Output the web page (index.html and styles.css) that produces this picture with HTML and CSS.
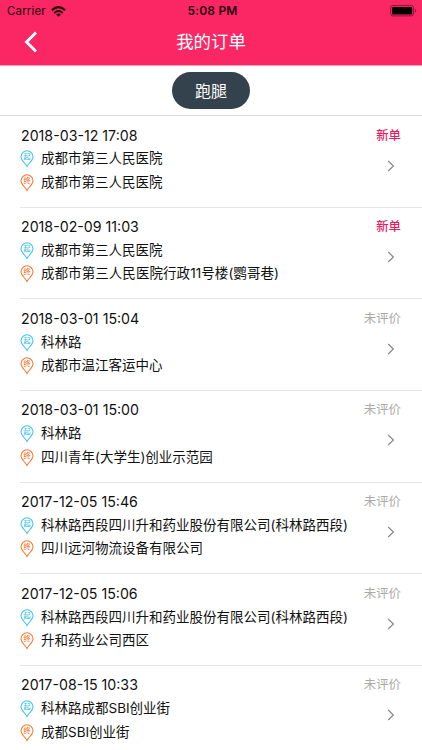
FILE: index.html
```
<!DOCTYPE html>
<html lang="zh-CN">
<head>
<meta charset="utf-8">
<title>我的订单</title>
<link rel="stylesheet" href="styles.css">
</head>
<body>
<svg class="defs" width="0" height="0">
  <symbol id="pin" viewBox="0 0 14 18"><path d="M7 16.400C5.600 13.400 1 10.600 1 6.800a6 6 0 0 1 12 0C13 10.600 8.400 13.400 7 16.400Z" fill="none" stroke="currentColor" stroke-width="1.100"/></symbol>
  <symbol id="chev" viewBox="0 0 8 12"><path d="M1.200 1 6.400 6 1.200 11" fill="none" stroke="currentColor" stroke-width="1.200"/></symbol>
</svg>
<header class="header">
  <div class="status">
    <div class="carrier"><span>Carrier</span>
      <svg width="15" height="11" viewBox="0 0 15 11"><g fill="none" stroke="#24000c" stroke-width="2"><path d="M.8 4.200Q7.500-2 14.200 4.200"/><path d="M3.200 6.900Q7.500 3 11.800 6.900"/></g><path d="M5.200 8.500Q7.500 6.600 9.800 8.500L7.500 10.800Z" fill="#24000c"/></svg>
    </div>
    <div class="time">5:08 PM</div>
    <div class="battery">
      <svg width="27" height="12" viewBox="0 0 27 12"><rect x=".6" y=".6" width="23" height="10.300" rx="2.300" fill="none" stroke="#8b1238" stroke-width="1"/><rect x="2" y="2" width="20.200" height="7.500" rx="1" fill="#000"/><path d="M25 4v3.500q1.300-.5 1.300-1.750T25 4" fill="#8b1238"/></svg>
    </div>
  </div>
  <div class="nav">
    <svg class="back" width="14" height="22" viewBox="0 0 14 22"><path d="M12 1.500 2.500 11 12 20.500" fill="none" stroke="#fff" stroke-width="2.900"/></svg>
    <h1>我的订单</h1>
  </div>
</header>
<div class="tabs"><span class="pill">跑腿</span></div>
<main class="orders">
  <article class="order"><div class="info"><div class="date">2018-03-12 17:08</div><div class="place"><span class="pin start"><svg><use href="#pin"/></svg><i>起</i></span>成都市第三人民医院</div><div class="place"><span class="pin end"><svg><use href="#pin"/></svg><i>终</i></span>成都市第三人民医院</div></div><div class="side"><span class="state new">新单</span><svg class="chev"><use href="#chev"/></svg></div></article>
  <article class="order"><div class="info"><div class="date">2018-02-09 11:03</div><div class="place"><span class="pin start"><svg><use href="#pin"/></svg><i>起</i></span>成都市第三人民医院</div><div class="place"><span class="pin end"><svg><use href="#pin"/></svg><i>终</i></span><span class="wide">成都市第三人民医院行政11号楼(鹦哥巷)</span></div></div><div class="side"><span class="state new">新单</span><svg class="chev"><use href="#chev"/></svg></div></article>
  <article class="order"><div class="info"><div class="date">2018-03-01 15:04</div><div class="place"><span class="pin start"><svg><use href="#pin"/></svg><i>起</i></span>科林路</div><div class="place"><span class="pin end"><svg><use href="#pin"/></svg><i>终</i></span>成都市温江客运中心</div></div><div class="side"><span class="state">未评价</span><svg class="chev"><use href="#chev"/></svg></div></article>
  <article class="order"><div class="info"><div class="date">2018-03-01 15:00</div><div class="place"><span class="pin start"><svg><use href="#pin"/></svg><i>起</i></span>科林路</div><div class="place"><span class="pin end"><svg><use href="#pin"/></svg><i>终</i></span>四川青年(大学生)创业示范园</div></div><div class="side"><span class="state">未评价</span><svg class="chev"><use href="#chev"/></svg></div></article>
  <article class="order"><div class="info"><div class="date">2017-12-05 15:46</div><div class="place"><span class="pin start"><svg><use href="#pin"/></svg><i>起</i></span>科林路西段四川升和药业股份有限公司(科林路西段)</div><div class="place"><span class="pin end"><svg><use href="#pin"/></svg><i>终</i></span>四川远河物流设备有限公司</div></div><div class="side"><span class="state">未评价</span><svg class="chev"><use href="#chev"/></svg></div></article>
  <article class="order"><div class="info"><div class="date">2017-12-05 15:06</div><div class="place"><span class="pin start"><svg><use href="#pin"/></svg><i>起</i></span>科林路西段四川升和药业股份有限公司(科林路西段)</div><div class="place"><span class="pin end"><svg><use href="#pin"/></svg><i>终</i></span>升和药业公司西区</div></div><div class="side"><span class="state">未评价</span><svg class="chev"><use href="#chev"/></svg></div></article>
  <article class="order"><div class="info"><div class="date">2017-08-15 10:33</div><div class="place"><span class="pin start"><svg><use href="#pin"/></svg><i>起</i></span>科林路成都SBI创业街</div><div class="place"><span class="pin end"><svg><use href="#pin"/></svg><i>终</i></span>成都SBI创业街</div></div><div class="side"><span class="state">未评价</span><svg class="chev"><use href="#chev"/></svg></div></article>
</main>
</body>
</html>
```
FILE: styles.css
```
* { box-sizing: border-box; }
html, body { height: 750px; overflow: hidden; }
body { margin: 0; background: #fff; color: #111; font-family: Inter, "Noto Sans CJK SC", sans-serif; }
.defs { position: absolute; }
.header { height: 66px; background: #fb2765; border-bottom: 1px solid #fd9cb8; }
.status { display: grid; grid-template-columns: 1fr auto 1fr; align-items: center; height: 22px; padding: 0 5px 0 7px; color: #24000c; }
.carrier { display: flex; align-items: center; gap: 5px; font-size: 11.500px; letter-spacing: .15px; }
.time { font-size: 12px; line-height: 21px; font-weight: 600; letter-spacing: .2px; padding-left: 1px; margin-top: -1px; }
.battery { display: flex; justify-content: flex-end; }
.nav { display: grid; grid-template-columns: 80px 1fr 80px; align-items: center; height: 40px; }
.back { margin-left: 24px; }
h1 { margin: 0; text-align: center; color: #fff; font-size: 17.400px; line-height: 40px; font-weight: 400; }
.tabs { display: flex; justify-content: center; align-items: center; height: 50px; border-bottom: 1px solid #dcdcdc; }
.pill { width: 78px; height: 37px; border-radius: 19px; background: #34424e; color: #fff; font-size: 16px; line-height: 38px; text-align: center; }
.order { display: flex; justify-content: space-between; height: 91.670px; margin-left: 20px; padding: 7.500px 21px 0 1px; border-bottom: 1px solid #e6e6e6; }
.date { height: 23.500px; line-height: 23px; font-size: 14.200px; white-space: nowrap; }
.place { display: flex; align-items: center; height: 23.500px; font-size: 13.500px; line-height: 23px; white-space: nowrap; }
.wide { letter-spacing: .06px; }
.pin { position: relative; width: 14px; height: 18px; margin: 1px 7px 0 -1px; flex: none; }
.pin svg { display: block; width: 14px; height: 18px; }
.pin i { position: absolute; left: 0; top: 1px; width: 14px; text-align: center; font-size: 7px; line-height: 11px; font-style: normal; font-weight: 500; }
.start { color: #42c4ee; }
.end { color: #f47b38; }
.side { display: flex; flex-direction: column; align-items: flex-end; }
.state { font-size: 12.400px; line-height: 23px; color: #aaa; }
.new { color: #e61c62; font-weight: 500; }
.chev { width: 8px; height: 12px; margin: 13px 6px 0 0; color: #888; }
```
